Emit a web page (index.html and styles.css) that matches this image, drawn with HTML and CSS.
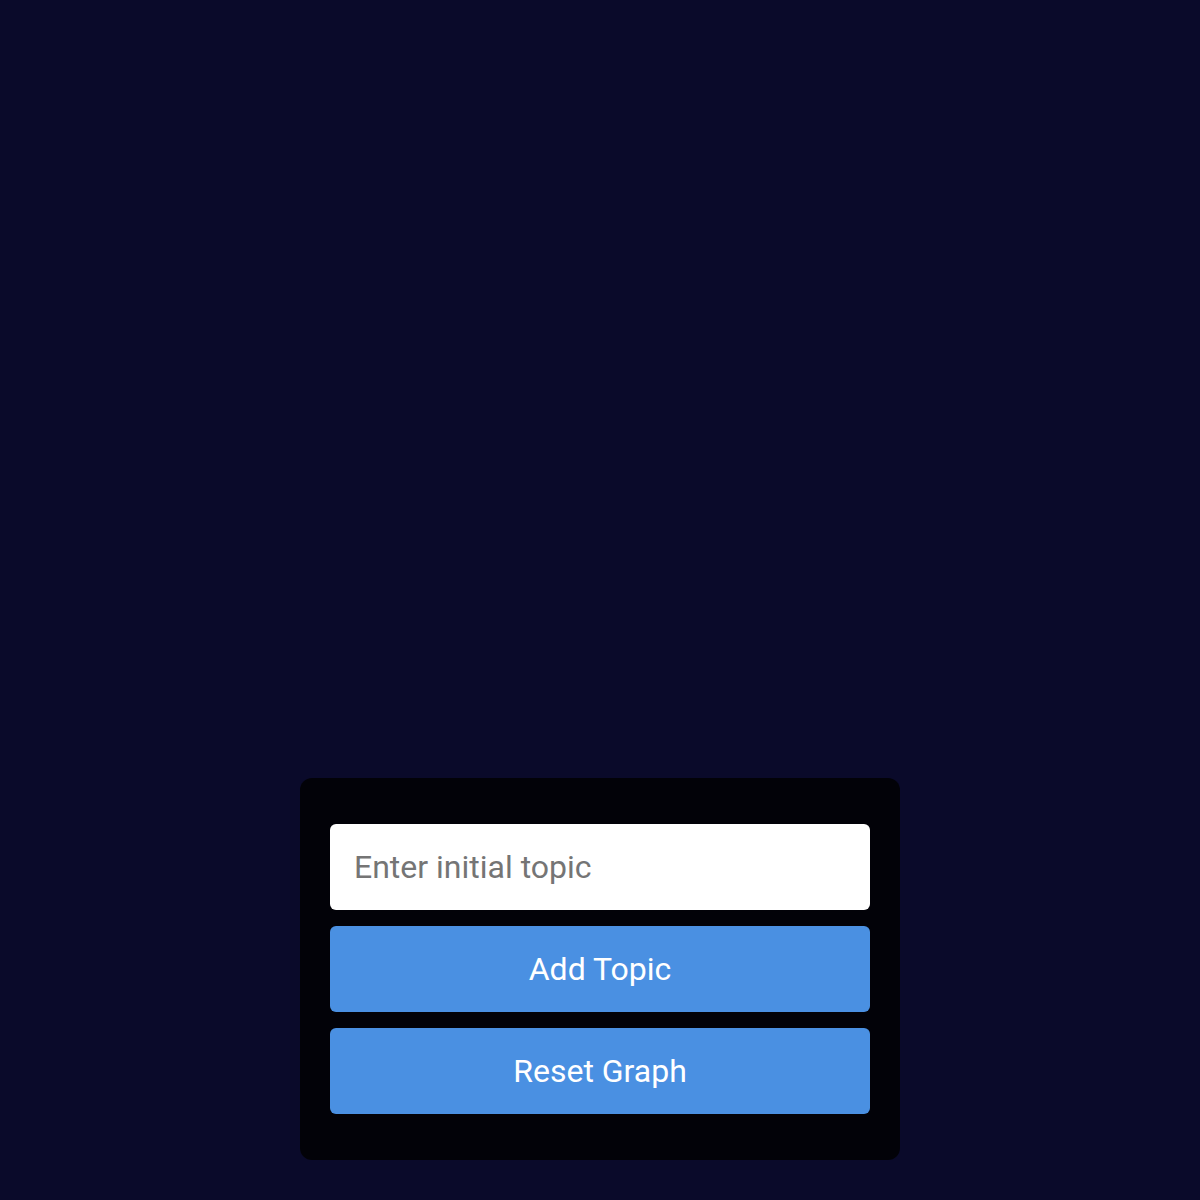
FILE: index.html
```html
<!DOCTYPE html>
<html lang="en">
<head>
    <meta charset="UTF-8">
    <meta name="viewport" content="width=device-width, initial-scale=1.0">
    <title>Topic Graph</title>
    <link rel="stylesheet" href="styles.css">
</head>
<body>

    <div class="graph" id="graph"></div>

    <div class="controls">
        <input type="text" id="topic" class="topic-input" placeholder="Enter initial topic">
        <button id="add">Add Topic</button>
        <button id="reset">Reset Graph</button>
    </div>

</body>
</html>
```

FILE: styles.css
```css
body {
    font-family: Roboto, 'Noto Sans', sans-serif;
    background-color: #0a0a2a; /* deep night blue */
    margin: 0;
    height: 100vh;
    display: flex;
    flex-direction: column;
    align-items: center;
}

.graph {
    flex: 1;
    width: 100%;
}

.controls {
    background-color: rgba(0, 0, 0, 0.8);
    width: 600px;
    box-sizing: border-box;
    padding: 46px 30px;
    border-radius: 12px;
    display: flex;
    flex-direction: column;
    gap: 16px;
    margin-bottom: 40px;
}

.topic-input {
    font-family: inherit;
    font-size: 32px;
    height: 86px;
    box-sizing: border-box;
    padding: 0 24px;
    border: none;
    border-radius: 6px;
    background-color: white;
    color: #333;
    outline: none;
}

.topic-input::placeholder {
    color: #757575;
}

button {
    font-family: inherit;
    font-size: 32px;
    height: 86px;
    background-color: #4a90e2;
    color: white;
    border: none;
    border-radius: 6px;
    cursor: pointer;
}

button:hover {
    background-color: #357abd;
}
```
